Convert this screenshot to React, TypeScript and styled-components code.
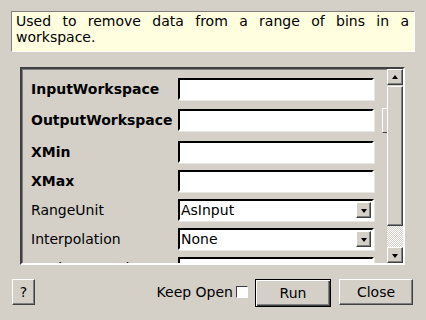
import React from "react";
import styled, { createGlobalStyle } from "styled-components";

const GlobalStyle = createGlobalStyle`
  html, body {
    margin: 0;
    padding: 0;
    background: #d4d0c8;
  }
  * {
    box-sizing: border-box;
  }
`;

const Window = styled.div`
  width: 426px;
  height: 320px;
  background: #d4d0c8;
  font-family: "DejaVu Sans", "Liberation Sans", sans-serif;
  font-size: 14px;
  color: #000;
  display: flex;
  flex-direction: column;
  overflow: hidden;
`;

const Description = styled.div`
  margin: 11px 11px 0 11px;
  height: 41px;
  background: #ffffe0;
  border-top: 1px solid #808080;
  border-left: 1px solid #808080;
  border-right: 1px solid #ffffff;
  border-bottom: 1px solid #ffffff;
  padding: 1px 5px 0 4px;
  line-height: 16px;
  text-align: justify;
`;

const Frame = styled.div`
  margin: 15px 0 0 20px;
  width: 385px;
  height: 198px;
  border-style: solid;
  border-width: 2px;
  border-color: #404040 #ffffff #ffffff #404040;
  box-shadow: inset 1px 1px 0 #808080;
  display: flex;
`;

const Viewport = styled.div`
  flex: 1;
  overflow: hidden;
  padding: 9px 0 0 9px;
  position: relative;
`;

const Row = styled.div<{ $h: number }>`
  height: ${({ $h }) => $h}px;
  display: flex;
  align-items: flex-start;
`;

const Label = styled.div<{ $bold?: boolean }>`
  width: 147px;
  height: 22px;
  line-height: 22px;
  font-weight: ${({ $bold }) => ($bold ? "bold" : "normal")};
  white-space: nowrap;
`;

const TextBox = styled.div`
  width: 196px;
  height: 22px;
  background: #fff;
  border-style: solid;
  border-width: 2px;
  border-color: #000 #ffffff #ffffff #000;
  box-shadow: 1px 1px 0 #e8e6e0;
`;

const Combo = styled(TextBox)`
  display: flex;
  align-items: center;
  justify-content: space-between;
  padding: 0 0 0 1px;
  line-height: 18px;
`;

const ComboButton = styled.div`
  width: 15px;
  height: 16px;
  margin-right: 1px;
  background: #d4d0c8;
  border-style: solid;
  border-width: 1px;
  border-color: #ffffff #404040 #404040 #ffffff;
  box-shadow: inset -1px -1px 0 #808080;
  display: flex;
  align-items: center;
  justify-content: center;
`;

const DownTriangle = styled.div`
  width: 0;
  height: 0;
  border-left: 3.5px solid transparent;
  border-right: 3.5px solid transparent;
  border-top: 4px solid #000;
  margin-top: 1px;
`;

const UpTriangle = styled.div`
  width: 0;
  height: 0;
  border-left: 3.5px solid transparent;
  border-right: 3.5px solid transparent;
  border-bottom: 4px solid #000;
`;

const Fragment = styled.div`
  position: absolute;
  left: 360px;
  top: 39px;
  width: 6px;
  height: 25px;
  border-left: 1px solid #ffffff;
  border-top: 1px solid #ffffff;
  border-bottom: 1px solid #404040;
`;

const ScrollBar = styled.div`
  width: 16px;
  display: flex;
  flex-direction: column;
`;

const ArrowButton = styled.div`
  height: 16px;
  background: #d4d0c8;
  border-style: solid;
  border-width: 1px;
  border-color: #ffffff #404040 #404040 #ffffff;
  box-shadow: inset -1px -1px 0 #808080;
  display: flex;
  align-items: center;
  justify-content: center;
`;

const Thumb = styled.div`
  height: 140px;
  margin-top: 1px;
  background: #d4d0c8;
  border-style: solid;
  border-width: 1px;
  border-color: #ffffff #404040 #404040 #ffffff;
  box-shadow: inset -1px -1px 0 #808080;
`;

const Trough = styled.div`
  flex: 1;
  background-color: #d4d0c8;
  background-image: linear-gradient(45deg, #ffffff 25%, transparent 25%, transparent 75%, #ffffff 75%),
    linear-gradient(45deg, #ffffff 25%, transparent 25%, transparent 75%, #ffffff 75%);
  background-size: 2px 2px;
  background-position: 0 0, 1px 1px;
`;

const Footer = styled.div`
  display: flex;
  align-items: flex-start;
  padding: 0 13px 0 12px;
  margin-top: 14px;
`;

const Button = styled.div<{ $w: number; $default?: boolean }>`
  width: ${({ $w }) => $w}px;
  height: ${({ $default }) => ($default ? 28 : 26)}px;
  background: #d4d0c8;
  display: flex;
  align-items: center;
  justify-content: center;
  border-style: solid;
  border-width: 1px;
  border-color: ${({ $default }) =>
    $default ? "#000" : "#ffffff #404040 #404040 #ffffff"};
  box-shadow: ${({ $default }) =>
    $default
      ? "inset 1px 1px 0 #ffffff, inset -1px -1px 0 #404040, inset -2px -2px 0 #808080"
      : "inset -1px -1px 0 #808080"};
`;

const Spacer = styled.div`
  flex: 1;
`;

const KeepOpen = styled.div`
  display: flex;
  align-items: center;
  height: 26px;
  margin-right: 7px;
`;

const CheckBox = styled.div`
  width: 12px;
  height: 12px;
  margin-left: 3px;
  background: #fff;
  border-style: solid;
  border-width: 1px;
  border-color: #404040 #ffffff #ffffff #404040;
`;

const CloseButton = styled(Button)`
  margin-left: 8px;
`;

export default function App() {
  return (
    <Window>
      <GlobalStyle />
      <Description>
        Used to remove data from a range of bins in a workspace.
      </Description>
      <Frame>
        <Viewport>
          <Row $h={31}>
            <Label $bold>InputWorkspace</Label>
            <TextBox />
          </Row>
          <Row $h={32}>
            <Label $bold>OutputWorkspace</Label>
            <TextBox />
          </Row>
          <Row $h={29}>
            <Label $bold>XMin</Label>
            <TextBox />
          </Row>
          <Row $h={29}>
            <Label $bold>XMax</Label>
            <TextBox />
          </Row>
          <Row $h={29}>
            <Label>RangeUnit</Label>
            <Combo>
              AsInput
              <ComboButton>
                <DownTriangle />
              </ComboButton>
            </Combo>
          </Row>
          <Row $h={29}>
            <Label>Interpolation</Label>
            <Combo>
              None
              <ComboButton>
                <DownTriangle />
              </ComboButton>
            </Combo>
          </Row>
          <Row $h={29}>
            <Label>WorkspaceIndex</Label>
            <TextBox />
          </Row>
          <Fragment />
        </Viewport>
        <ScrollBar>
          <ArrowButton>
            <UpTriangle />
          </ArrowButton>
          <Thumb />
          <Trough />
          <ArrowButton>
            <DownTriangle />
          </ArrowButton>
        </ScrollBar>
      </Frame>
      <Footer>
        <Button $w={23}>?</Button>
        <Spacer />
        <KeepOpen>
          Keep Open
          <CheckBox />
        </KeepOpen>
        <Button $w={76} $default>
          Run
        </Button>
        <CloseButton $w={74}>Close</CloseButton>
      </Footer>
    </Window>
  );
}
